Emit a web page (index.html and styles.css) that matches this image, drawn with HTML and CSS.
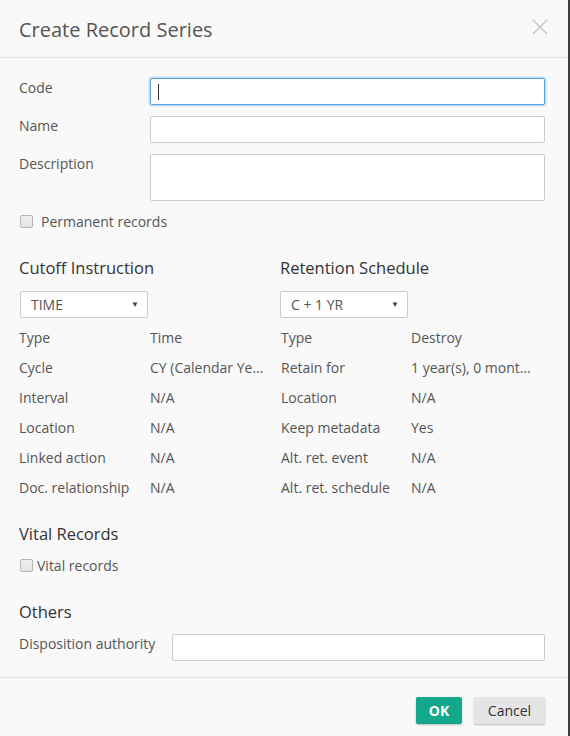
FILE: index.html
```html
<!DOCTYPE html>
<html>
<head>
<meta charset="utf-8">
<link rel="stylesheet" href="styles.css">
</head>
<body>
<div class="dialog">
  <div class="header">
    <h1 class="title">Create Record Series</h1>
    <span class="close">
      <svg width="16" height="16" viewBox="0 0 16 16"><path d="M1 1L15 15M15 1L1 15" stroke="#c8c8c8" stroke-width="1.6" fill="none"/></svg>
    </span>
  </div>
  <div class="content">
    <div class="form-row">
      <label class="label">Code</label>
      <div class="input focus"><span class="caret"></span></div>
    </div>
    <div class="form-row">
      <label class="label">Name</label>
      <div class="input"></div>
    </div>
    <div class="form-row last">
      <label class="label">Description</label>
      <div class="input textarea"></div>
    </div>
    <div class="check-row">
      <span class="checkbox"></span><span class="check-text wide">Permanent records</span>
    </div>

    <div class="columns">
      <div class="col">
        <h2 class="section">Cutoff Instruction</h2>
        <div class="select"><span>TIME</span><span class="arrow">▼</span></div>
        <div class="props">
          <div class="prop"><span class="k">Type</span><span class="v">Time</span></div>
          <div class="prop"><span class="k">Cycle</span><span class="v">CY (Calendar Year)</span></div>
          <div class="prop"><span class="k">Interval</span><span class="v">N/A</span></div>
          <div class="prop"><span class="k">Location</span><span class="v">N/A</span></div>
          <div class="prop"><span class="k">Linked action</span><span class="v">N/A</span></div>
          <div class="prop"><span class="k">Doc. relationship</span><span class="v">N/A</span></div>
        </div>
      </div>
      <div class="col">
        <h2 class="section">Retention Schedule</h2>
        <div class="select"><span>C + 1 YR</span><span class="arrow">▼</span></div>
        <div class="props">
          <div class="prop"><span class="k">Type</span><span class="v">Destroy</span></div>
          <div class="prop"><span class="k">Retain for</span><span class="v">1 year(s), 0 month(s), 0 day(s)</span></div>
          <div class="prop"><span class="k">Location</span><span class="v">N/A</span></div>
          <div class="prop"><span class="k">Keep metadata</span><span class="v">Yes</span></div>
          <div class="prop"><span class="k">Alt. ret. event</span><span class="v">N/A</span></div>
          <div class="prop"><span class="k">Alt. ret. schedule</span><span class="v">N/A</span></div>
        </div>
      </div>
    </div>

    <h2 class="section vital">Vital Records</h2>
    <div class="check-row tight">
      <span class="checkbox"></span><span class="check-text">Vital records</span>
    </div>

    <h2 class="section others">Others</h2>
    <div class="form-row disp">
      <label class="label">Disposition authority</label>
      <div class="input"></div>
    </div>
  </div>
  <div class="footer">
    <button class="btn ok">OK</button>
    <button class="btn cancel">Cancel</button>
  </div>
</div>
</body>
</html>
```
FILE: styles.css
```css
html, body {
  margin: 0;
  padding: 0;
  background: #f9f9f9;
}
body {
  font-family: "Open Sans", "Liberation Sans", sans-serif;
  font-size: 14px;
  color: #555;
}
.dialog {
  width: 568px;
  height: 736px;
  border-right: 2px solid #3c3c3c;
  background: #f9f9f9;
  display: flex;
  flex-direction: column;
}
.header {
  height: 57px;
  border-bottom: 1px solid #e3e3e3;
  display: flex;
  align-items: center;
  justify-content: space-between;
  padding: 0 20px 0 19px;
  box-sizing: content-box;
}
.title {
  margin: 0;
  font-size: 20px;
  font-weight: normal;
  color: #555;
  line-height: 26px;
  position: relative;
  top: 1px;
}
.close {
  display: flex;
  position: relative;
  top: -2px;
}
.content {
  padding: 20px 23px 16px 19px;
  border-bottom: 1px solid #e3e3e3;
}
.form-row {
  display: grid;
  grid-template-columns: 131px 1fr;
  align-items: start;
  margin-bottom: 11px;
}
.form-row.last {
  margin-bottom: 10px;
}
.form-row.disp {
  grid-template-columns: 153px 1fr;
  margin-bottom: 0;
}
.label {
  line-height: 20px;
  color: #555;
}
.input {
  height: 27px;
  box-sizing: border-box;
  border: 1px solid #ccc;
  border-radius: 2px;
  background: #fff;
  position: relative;
}
.input.textarea {
  height: 47px;
}
.input.focus {
  border-color: #5aa3ea;
  box-shadow: 0 0 2px 1px rgba(102, 175, 233, 0.55);
}
.caret {
  position: absolute;
  left: 7px;
  top: 5px;
  width: 1px;
  height: 16px;
  background: #333;
}
.check-row {
  display: flex;
  align-items: center;
  height: 20px;
}
.checkbox {
  width: 11px;
  height: 11px;
  border: 1px solid #b5b5b5;
  border-radius: 2px;
  background: linear-gradient(#f0f0f0, #e2e2e2);
  margin-left: 1px;
}
.check-text {
  margin-left: 4px;
  color: #555;
}
.check-text.wide {
  margin-left: 8px;
}
.columns {
  display: grid;
  grid-template-columns: 262px 1fr;
  margin-top: 25px;
}
.section {
  margin: 0;
  color: #333;
  line-height: 24px;
  font-weight: normal;
  font-size: 16.5px;
}
.col:nth-child(2) .section {
  margin-left: -1px;
}
.select {
  margin-top: 11px;
  width: 128px;
  height: 27px;
  box-sizing: border-box;
  border: 1px solid #ccc;
  border-radius: 2px;
  background: #fff;
  margin-left: 1px;
  display: flex;
  align-items: center;
  justify-content: space-between;
  padding: 0 8px 0 10px;
  color: #555;
}
.col:nth-child(2) .select {
  margin-left: -1px;
}
.arrow {
  font-size: 8px;
  color: #444;
  position: relative;
  top: -1px;
}
.props {
  margin-top: 5px;
}
.prop {
  display: grid;
  grid-template-columns: 131px 1fr;
  line-height: 30px;
  height: 30px;
  padding-right: 11.5px;
}
.k, .v {
  white-space: nowrap;
  overflow: hidden;
  text-overflow: ellipsis;
  color: #555;
}
.col:nth-child(2) .prop {
  grid-template-columns: 130px 1fr;
  padding-right: 14px;
}
.section.vital {
  margin-top: 19px;
}
.check-row.tight {
  margin-top: 9px;
}
.section.others {
  margin-top: 25px;
  margin-bottom: 10px;
}
.footer {
  display: flex;
  justify-content: flex-end;
  gap: 12px;
  padding: 19px 23px 0 0;
}
.btn {
  height: 27px;
  border: none;
  border-radius: 2px;
  font-family: "Open Sans", "Liberation Sans", sans-serif;
  font-size: 14px;
  padding: 0;
  box-shadow: 0 1px 2px rgba(0, 0, 0, 0.25);
}
.btn.ok {
  width: 46px;
  background: #13a88b;
  color: #fff;
  font-weight: bold;
}
.btn.cancel {
  width: 71px;
  background: #e5e5e5;
  color: #333;
}
```
